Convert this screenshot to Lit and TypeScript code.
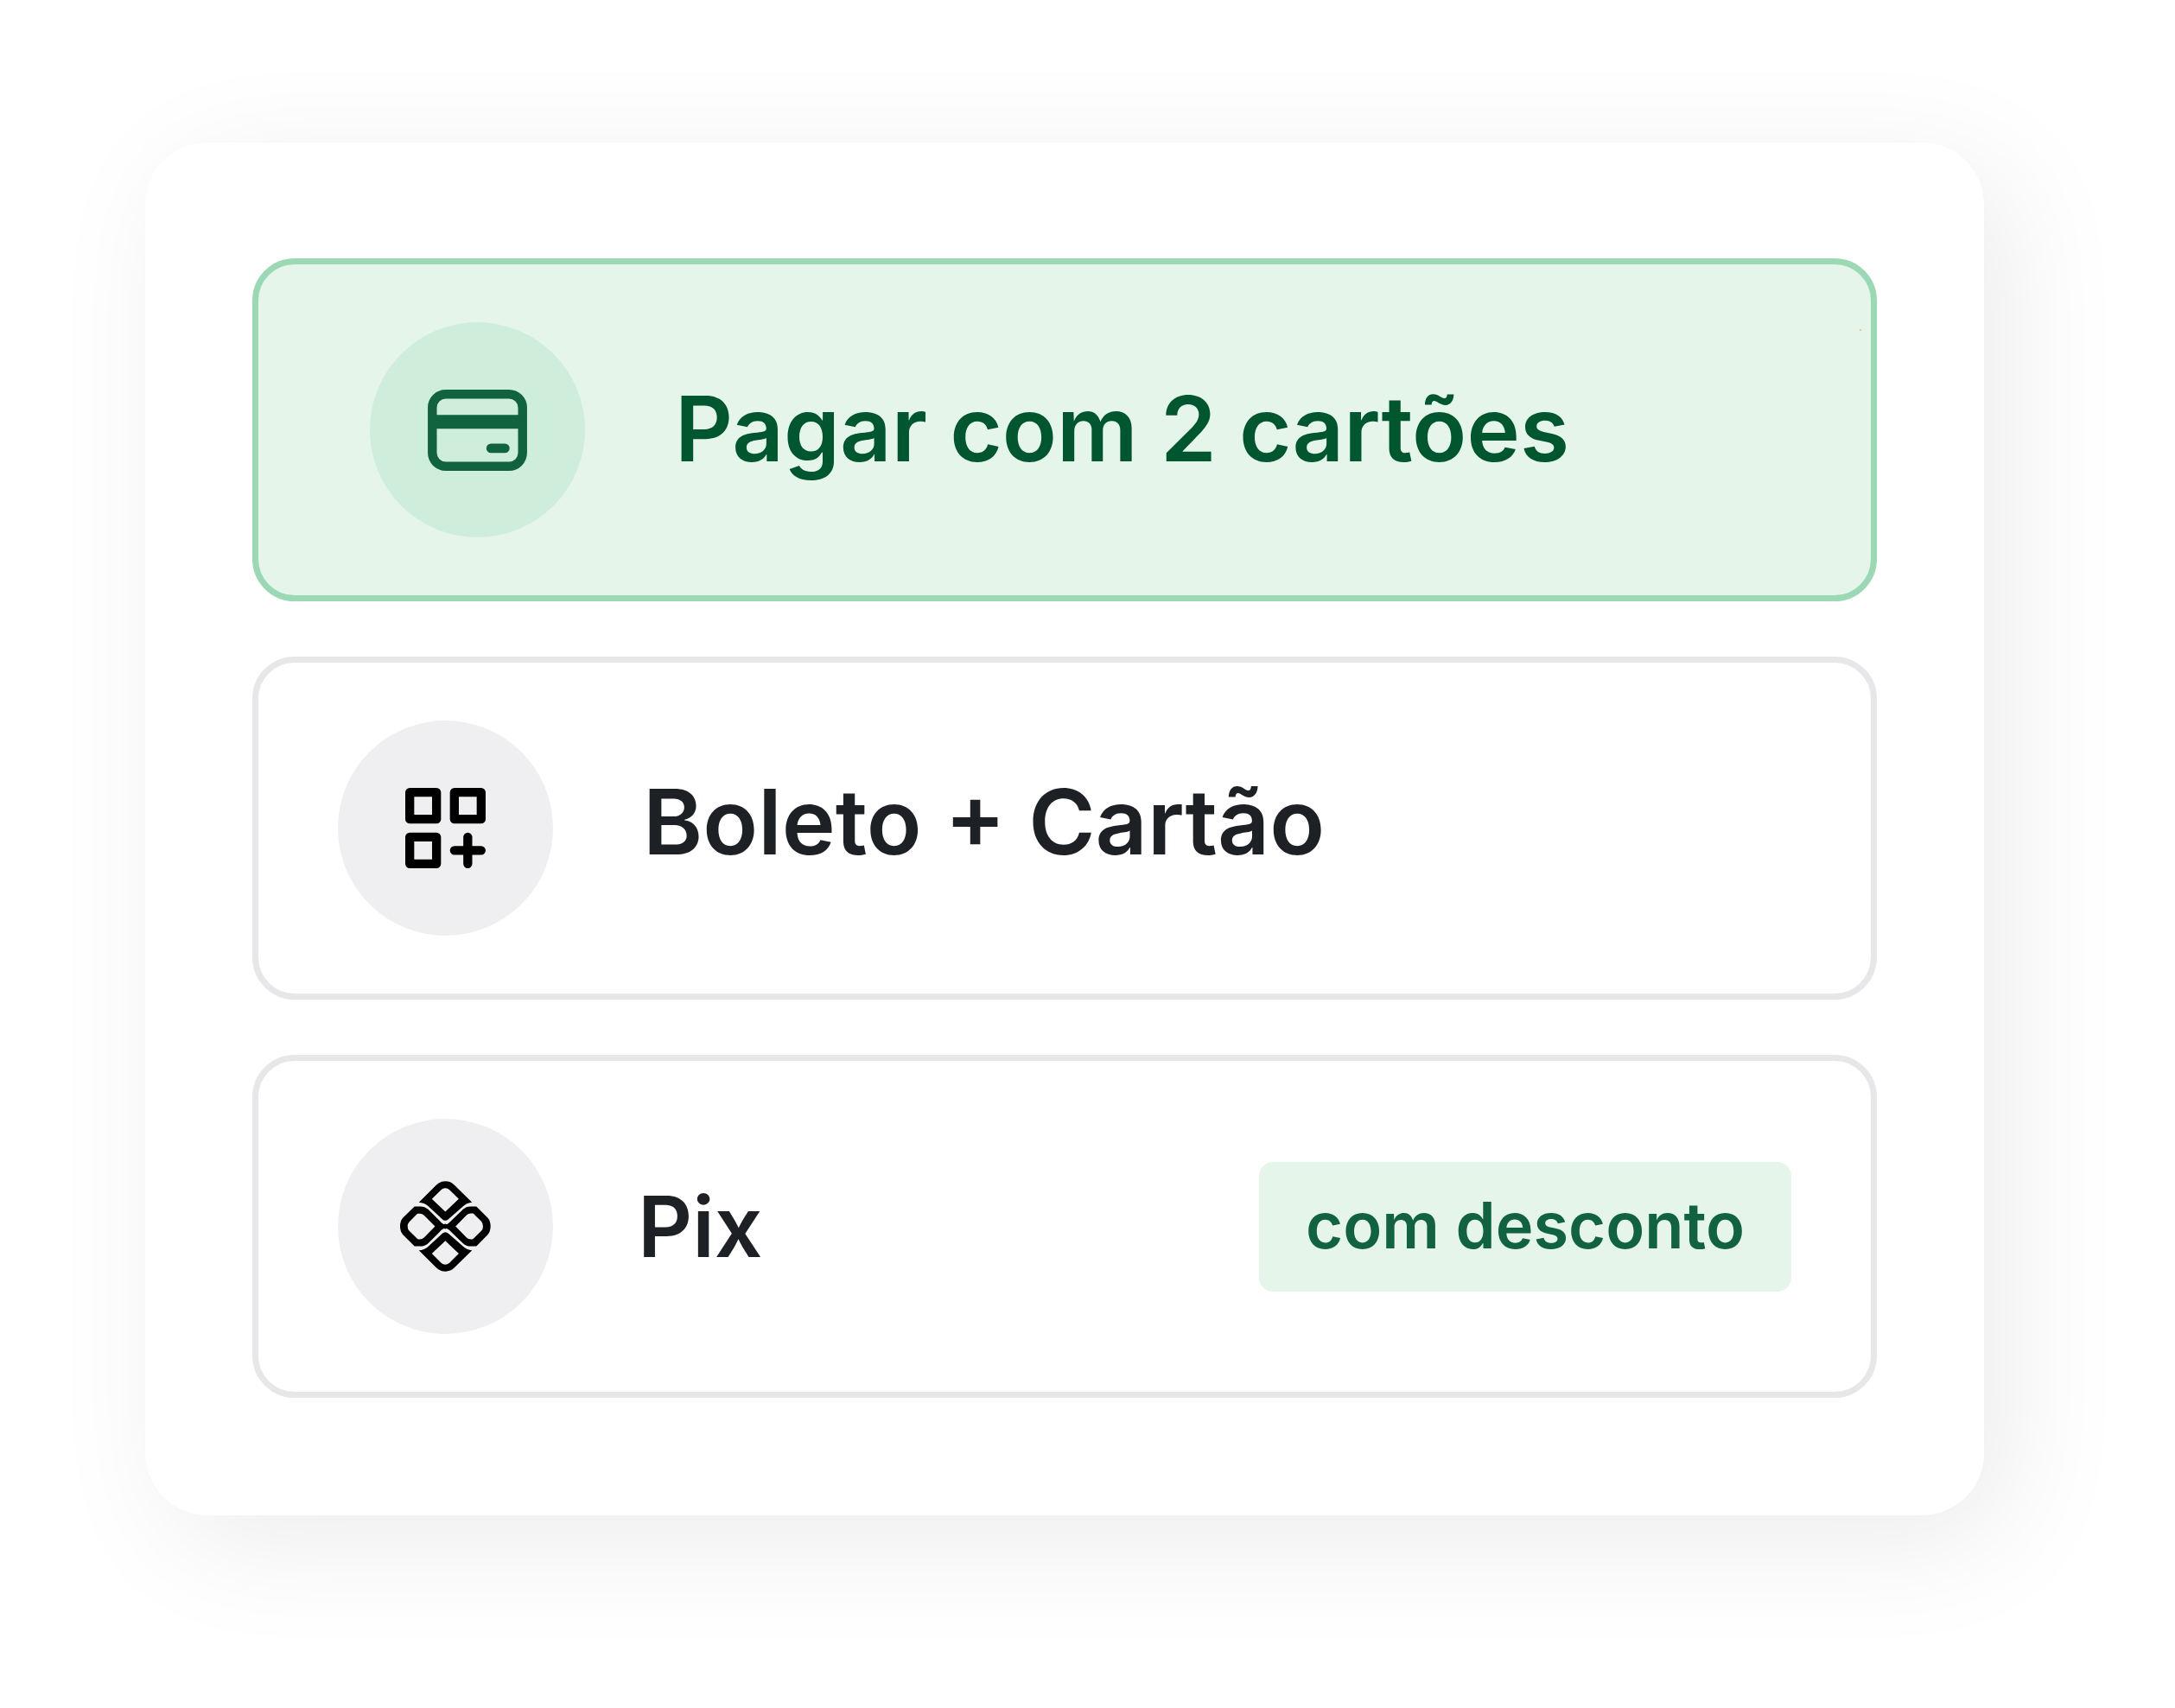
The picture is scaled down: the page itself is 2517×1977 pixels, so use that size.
import { LitElement, html, css, svg, nothing } from "lit";
import { customElement, property, state } from "lit/decorators.js";
import { classMap } from "lit/directives/class-map.js";

type IconName = "card" | "grid" | "pix";

interface PaymentOption {
  id: string;
  label: string;
  icon: IconName;
  badge?: string;
}

const OPTIONS: PaymentOption[] = [
  { id: "cards", label: "Pagar com 2 cartões", icon: "card" },
  { id: "boleto", label: "Boleto + Cartão", icon: "grid" },
  { id: "pix", label: "Pix", icon: "pix", badge: "com desconto" },
];

const cardIcon = svg`
  <rect x="1" y="1" width="20" height="16" rx="3" fill="none" stroke="currentColor" stroke-width="2"/>
  <path d="M1 5.6h20v3.05h-20z" fill="currentColor"/>
  <path d="M14 13h3.1" stroke="currentColor" stroke-width="2.05" stroke-linecap="round"/>`;

const gridIcon = svg`
  <g fill="none" stroke="currentColor" stroke-width="2" stroke-linecap="round" stroke-linejoin="round">
    <path d="M4 4h6v6h-6zM14 4h6v6h-6zM4 14h6v6h-6z"/>
    <path d="M14 17h6M17 14v6"/>
  </g>`;

const pixIcon = svg`
  <g fill="currentColor" fill-rule="evenodd">
    <path d="M135 130L195 70Q208 57 226.500 57Q245 57 258 70L319 130Q301 132 290 142L237 188Q226.500 198 216 188L167 143Q154 131 135 130ZM180 118L226.500 162L273 118L241 87Q235 81 226.500 81Q218 81 212 87Z"/>
    <path d="M135 296L195 356Q208 369 226.500 369Q245 369 258 356L319 296Q301 294 290 284L237 238Q226.500 228 216 238L167 283Q154 295 135 296ZM180 307L226.500 263L273 307L241 339Q235 345 226.500 345Q218 345 212 339Z"/>
    <path d="M120 144H140Q155 144 167 154L213 200Q226.500 213 240 200L288 154Q299 144 314 144H334L373 183Q383 194 383 213Q383 231 373 242L334 282H314Q299 282 288 272L240 226Q226.500 213 213 226L167 272Q155 282 140 282H120L80 242Q70 231 70 213Q70 194 80 183ZM130 169L102 197Q96 203 96 213Q96 223 102 229L130 256Q133 258 138 258Q147 258 153 252L191 213L153 175Q147 169 138 169ZM323 168L351 196Q357 203 357 213Q357 223 351 229L323 256Q320 258 315 258Q306 258 300 252L262 213L300 174Q306 168 315 168Z"/>
    <path d="M207 213L226.500 204L246 213L226.500 222Z"/>
  </g>`;

const ICONS = {
  card: { box: "0 0 22 18", art: cardIcon },
  grid: { box: "3 3 18 18", art: gridIcon },
  pix: { box: "70 56 314 314", art: pixIcon },
};

@customElement("payment-option")
export class PaymentOptionRow extends LitElement {
  @property({ attribute: false }) option!: PaymentOption;
  @property({ type: Boolean }) selected = false;

  static styles = css`
    :host {
      display: block;
    }
    .option {
      position: relative;
      display: flex;
      align-items: center;
      box-sizing: border-box;
      padding: 67px 92px;
      border: 7px solid #e7e7ea;
      border-radius: 49px;
      background: #fff;
      color: #1d2025;
      cursor: pointer;
    }
    .option.selected {
      padding-left: 129px;
      border-color: #9bd8b4;
      background: #e6f5ea;
      color: #00572f;
    }
    .radio {
      position: absolute;
      inset: 0;
      margin: 0;
      appearance: none;
      border-radius: 42px;
      cursor: pointer;
    }
    .radio:focus-visible {
      outline: 4px solid #11623f;
    }
    .disc {
      flex: none;
      display: grid;
      place-items: center;
      width: 249px;
      height: 249px;
      border-radius: 50%;
      background: #efeff1;
      color: #000;
    }
    .selected .disc {
      background: #cfeddb;
      color: #11623f;
    }
    .icon {
      display: block;
    }
    .icon.card {
      width: 115px;
      height: 94px;
    }
    .icon.grid {
      width: 93px;
      height: 93px;
    }
    .icon.pix {
      width: 105px;
      height: 105px;
    }
    .label {
      flex: 1;
      margin-left: 104px;
      padding-bottom: 4px;
      font-size: 104px;
      line-height: 128px;
      font-weight: 600;
      white-space: nowrap;
    }
    .label.grid {
      padding-bottom: 16px;
      font-size: 105px;
    }
    .label.pix {
      margin-left: 98px;
      padding-bottom: 0;
      font-size: 98px;
    }
    .badge {
      padding: 29px 54px 33px;
      border-radius: 16px;
      background: #e6f5ea;
      color: #11623f;
      font-size: 74px;
      line-height: 88px;
      font-weight: 600;
      white-space: nowrap;
    }
    .speck {
      position: absolute;
      top: 75px;
      right: 11px;
      width: 2px;
      height: 2px;
      background: #efc384;
    }
  `;

  private choose() {
    this.dispatchEvent(new CustomEvent("choose", { detail: this.option.id }));
  }

  render() {
    const { id, label, icon, badge } = this.option;
    const { box, art } = ICONS[icon];
    return html`
      <label class=${classMap({ option: true, selected: this.selected })} for=${id}>
        <input
          class="radio"
          type="radio"
          id=${id}
          name="payment"
          .checked=${this.selected}
          @change=${this.choose}
        />
        <span class="disc">
          <svg class="icon ${icon}" viewBox=${box} aria-hidden="true">${art}</svg>
        </span>
        <span class="label ${icon}">${label}</span>
        ${badge ? html`<span class="badge">${badge}</span>` : nothing}
        ${this.selected ? html`<span class="speck"></span>` : nothing}
      </label>
    `;
  }
}

@customElement("app-root")
export class AppRoot extends LitElement {
  @state() private selected = "cards";

  static styles = css`
    :host {
      display: block;
      box-sizing: border-box;
      min-height: 100vh;
      padding: 165px 221px 165px 168px;
      background: #fff;
      font-family: Inter, "Liberation Sans", sans-serif;
    }
    .panel {
      display: flex;
      flex-direction: column;
      gap: 64px;
      padding: 134px 124px 136px;
      border-radius: 72px;
      background: #fff;
      box-shadow: 28px 30px 140px rgba(0, 0, 0, 0.08);
    }
  `;

  render() {
    return html`
      <main class="panel" role="radiogroup">
        ${OPTIONS.map(
          (option) => html`<payment-option
            .option=${option}
            ?selected=${this.selected === option.id}
            @choose=${(e: CustomEvent<string>) => (this.selected = e.detail)}
          ></payment-option>`,
        )}
      </main>
    `;
  }
}
